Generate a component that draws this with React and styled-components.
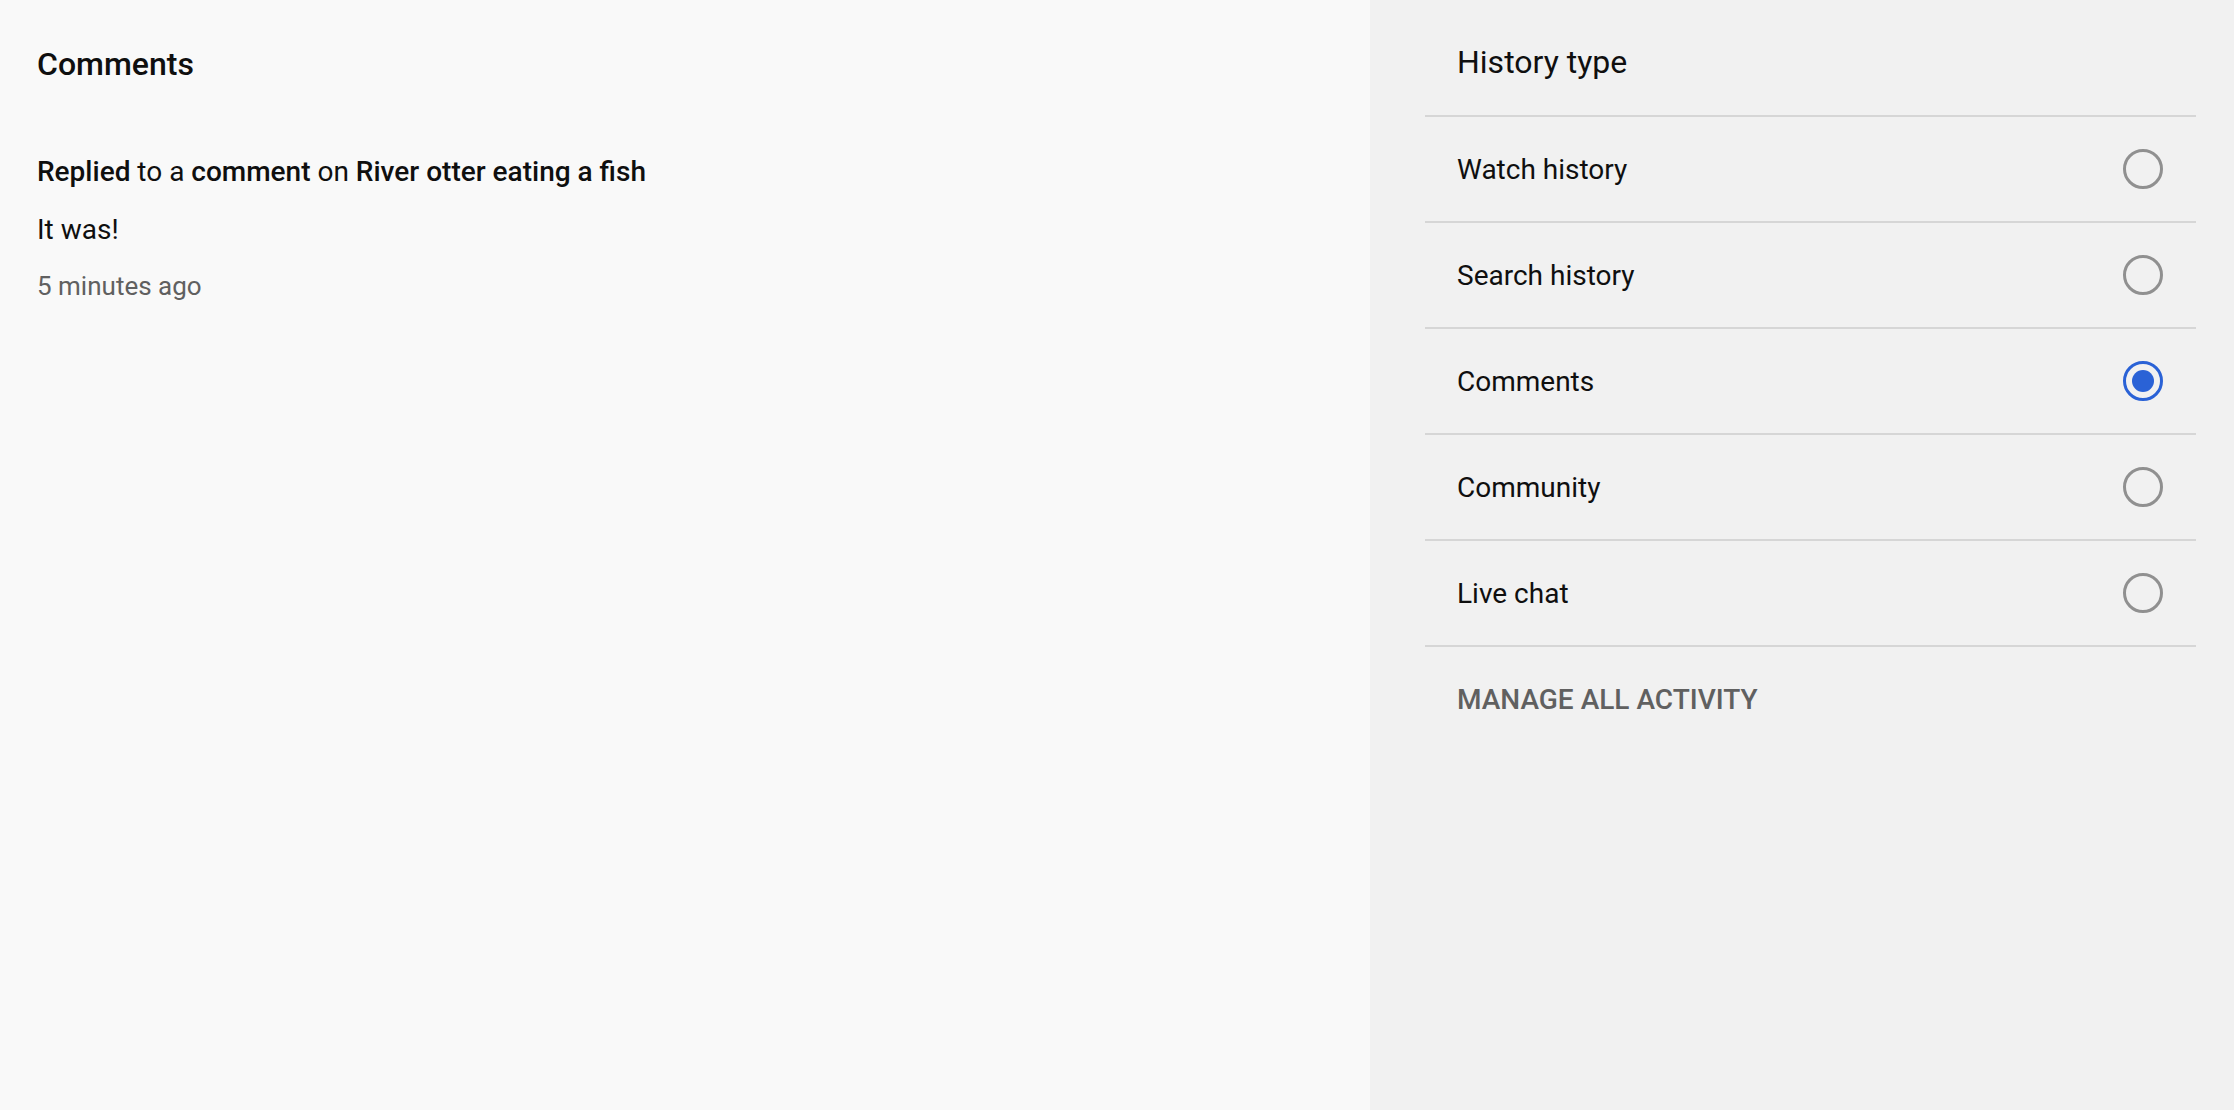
import React from 'react';
import styled, { createGlobalStyle } from 'styled-components';

const Global = createGlobalStyle`
    body {
        margin: 0;
        font-family: Roboto, "Liberation Sans", sans-serif;
        color: #0f0f0f;
    }
`;

const Page = styled.div`
    display: flex;
    height: 1110px;
    background-color: #f9f9f9;
`;

const Main = styled.section`
    flex: 1;
    padding: 44px 37px;
`;

const MainTitle = styled.h2`
    font-size: 32px;
    font-weight: 500;
    margin: 0 0 68px;
    line-height: 40px;
`;

const Activity = styled.p`
    font-size: 28px;
    margin: 0 0 18px;
    line-height: 40px;
    b { font-weight: 500; }
`;

const Time = styled.p`
    font-size: 26px;
    color: #606060;
    margin: 0;
    line-height: 36px;
`;

const Side = styled.aside`
    width: 864px;
    background-color: #f1f1f1;
    padding: 0 38px 0 55px;
    box-sizing: border-box;
`;

const SideTitle = styled.h3`
    font-size: 32px;
    font-weight: 400;
    margin: 0;
    padding: 0 32px;
    height: 117px;
    line-height: 124px;
    border-bottom: 2px solid #d6d6d6;
    box-sizing: border-box;
`;

const Row = styled.label`
    display: flex;
    align-items: center;
    justify-content: space-between;
    height: 106px;
    padding: 0 33px 0 32px;
    border-bottom: 2px solid #d6d6d6;
    box-sizing: border-box;
    font-size: 28px;
    cursor: pointer;
`;

const Radio = styled.span`
    width: 40px;
    height: 40px;
    border-radius: 50%;
    box-sizing: border-box;
    border: 3px solid ${p => (p.checked ? '#2a62d6' : '#909090')};
    display: flex;
    align-items: center;
    justify-content: center;
    &::after {
        content: '';
        width: 22px;
        height: 22px;
        border-radius: 50%;
        background: ${p => (p.checked ? '#2a62d6' : 'transparent')};
    }
`;

const Manage = styled.div`
    padding: 0 32px;
    height: 106px;
    line-height: 106px;
    font-size: 28px;
    font-weight: 500;
    color: #606060;
    text-transform: uppercase;
`;

const types = ['Watch history', 'Search history', 'Comments', 'Community', 'Live chat'];

const App = () => {
    return (
        <Page>
            <Global />
            <Main>
                <MainTitle>Comments</MainTitle>
                <Activity>
                    <b>Replied</b> to a <b>comment</b> on <b>River otter eating a fish</b>
                </Activity>
                <Activity>It was!</Activity>
                <Time>5 minutes ago</Time>
            </Main>
            <Side>
                <SideTitle>History type</SideTitle>
                {types.map(t => (
                    <Row key={t}>
                        {t}
                        <Radio checked={t === 'Comments'} />
                    </Row>
                ))}
                <Manage>Manage all activity</Manage>
            </Side>
        </Page>
    );
};

export default App;
